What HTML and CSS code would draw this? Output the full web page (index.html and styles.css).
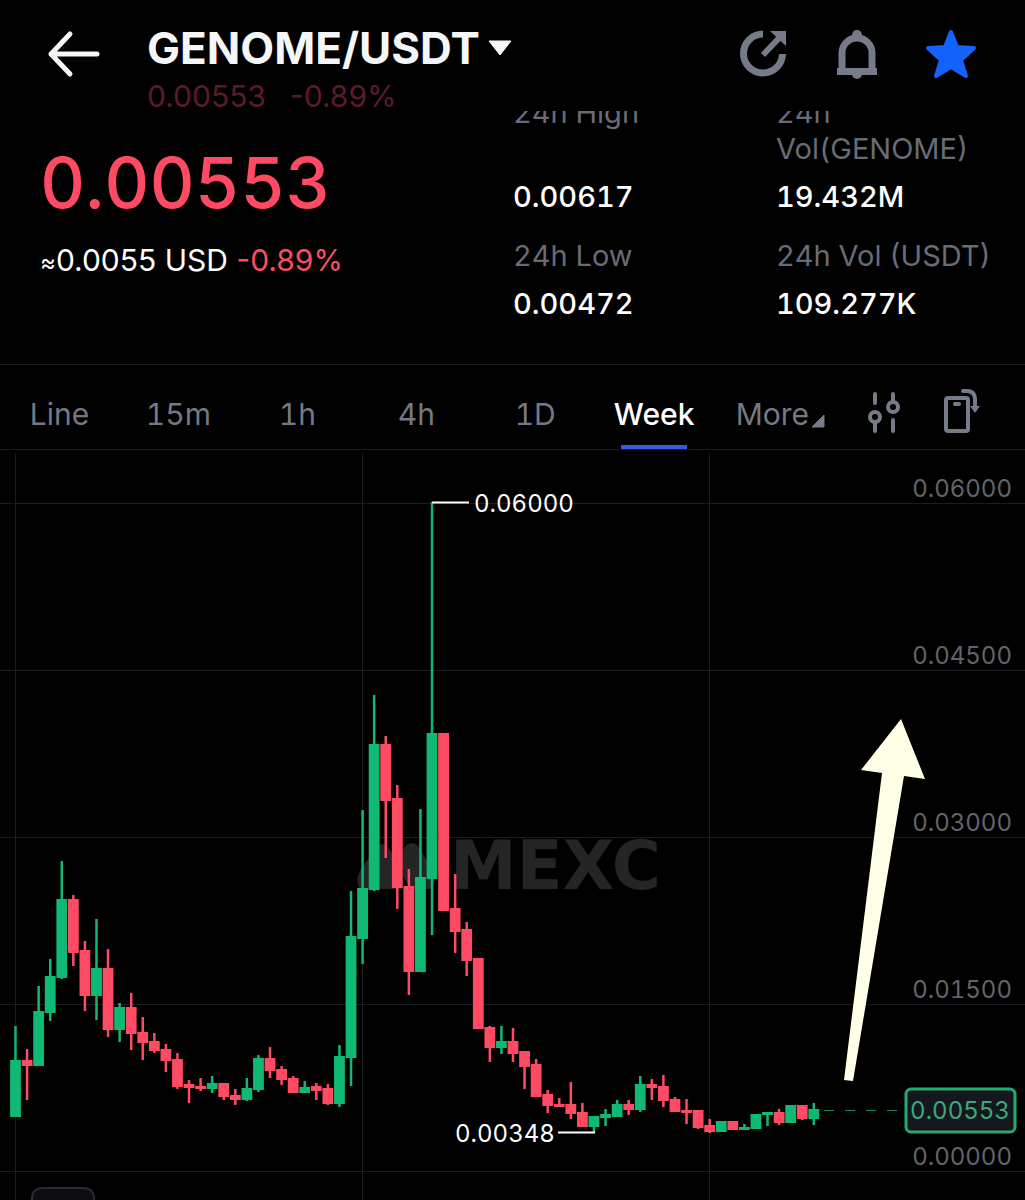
FILE: index.html
```html
<!DOCTYPE html>
<html lang="en">
<head>
    <meta charset="utf-8">
    <meta name="viewport" content="width=device-width, initial-scale=1">
    <title>GENOME/USDT</title>
    <link rel="stylesheet" href="styles.css">
</head>
<body>
    <header class="topbar">
        <button class="icon-btn back" aria-label="Back">
            <svg width="54" height="48" viewBox="0 0 54 48"><path d="M23 4L4 24l19 20M4 24h46" fill="none" stroke="#f5f6f8" stroke-width="5" stroke-linecap="round" stroke-linejoin="round"/></svg>
        </button>
        <div class="pair">
            <button class="pair-btn">
                <span class="pair-name">GENOME/USDT</span>
                <svg width="24" height="16" viewBox="0 0 24 16"><path d="M1 1h22L12 15z" fill="#f5f6f8" stroke="#f5f6f8" stroke-linejoin="round"/></svg>
            </button>
            <div class="pair-price"><span>0.00553</span><span>-0.89%</span></div>
        </div>
        <div class="actions">
            <button class="icon-btn" aria-label="Share">
                <svg width="52" height="52" viewBox="0 0 52 52"><path d="M26 7A19.5 19.5 0 1 0 45.500 27" fill="none" stroke="#757b88" stroke-width="7"/><path d="M26 28L43 10" stroke="#757b88" stroke-width="6"/><path d="M33 4h16v15z" fill="#757b88"/></svg>
            </button>
            <button class="icon-btn" aria-label="Price alert">
                <svg width="52" height="52" viewBox="0 0 52 52"><g fill="#757b88"><circle cx="26" cy="8" r="5"/><path d="M6 41h40v7H6z"/><path d="M21 47a5 5 0 0 0 10 0z"/></g><path d="M11 43V26a15 15 0 0 1 30 0v17" fill="none" stroke="#757b88" stroke-width="7"/></svg>
            </button>
            <button class="icon-btn" aria-label="Favourite">
                <svg width="52" height="52" viewBox="0 0 52 52"><path d="M26 5l6 15 17 1-13 12 5 16-15-9-15 9 5-16L3 21l17-1z" fill="#1462fc" stroke="#1462fc" stroke-width="4" stroke-linejoin="round"/></svg>
            </button>
        </div>
    </header>

    <section class="summary">
        <div class="price-box">
            <div class="price">0.00553</div>
            <div class="price-sub"><span><small>≈</small>0.0055 USD</span> <span class="down">-0.89%</span></div>
        </div>
        <dl class="stats">
            <div><dt>24h High</dt><dd>0.00617</dd></div>
            <div><dt>24h<br>Vol(GENOME)</dt><dd>19.432M</dd></div>
            <div><dt>24h Low</dt><dd>0.00472</dd></div>
            <div><dt>24h Vol (USDT)</dt><dd>109.277K</dd></div>
        </dl>
    </section>

    <nav class="intervals">
        <div class="tabs">
            <button>Line</button>
            <button>15m</button>
            <button>1h</button>
            <button>4h</button>
            <button>1D</button>
            <button class="active">Week</button>
        </div>
        <div class="tools">
            <button class="more">More<svg width="14" height="14" viewBox="0 0 14 14"><path d="M13 1v12H1z" fill="#757b88" stroke="#757b88" stroke-linejoin="round"/></svg></button>
            <button class="icon-btn" aria-label="Indicators">
                <svg width="34" height="46" viewBox="0 0 34 46"><g fill="none" stroke="#757b88" stroke-width="4" stroke-linecap="round"><path d="M8 5v9M8 33v9M26 5v6M26 31v11"/><circle cx="8" cy="28" r="5"/><circle cx="26" cy="18" r="5"/></g></svg>
            </button>
            <button class="icon-btn" aria-label="Landscape">
                <svg width="38" height="46" viewBox="0 0 38 46"><g fill="none" stroke="#757b88" stroke-width="4" stroke-linecap="round"><rect x="3" y="9" width="22" height="33" rx="2"/><path d="M12 15h4"/><path d="M20 2h4q8 0 8 9v8"/></g><path d="M27 17h10l-5 7z" fill="#757b88"/></svg>
            </button>
        </div>
    </nav>

    <main class="chart">
        <svg class="chart-svg" viewBox="0 450 1025 750" role="img" aria-label="Weekly candlestick chart">
            <g class="watermark">
                <path d="M358 884q-2-6 3-15l13-19q8-12 16 0l7 11 6-12q9-12 17 0l13 22q4 10-2 18h-20l-14-22v22h-36q-2 0-3-5z"/>
                <text x="450" y="889">MEXC</text>
            </g>
            <path class="grid" d="M0 503.500h1025M0 670.500h1025M0 837.500h1025M0 1004.500h1025M0 1171.500h1025M15.500 453v747M362.500 453v747M709.500 453v747"/>
            <g id="candles"></g>
            <path class="mark-line" d="M432 502.500h37M558 1132.500h37"/>
            <g class="mark">
                <text x="474" y="512">0.06000</text>
                <text x="455" y="1142">0.00348</text>
            </g>
            <g class="axis">
                <text x="1012" y="497">0.06000</text>
                <text x="1012" y="664">0.04500</text>
                <text x="1012" y="831">0.03000</text>
                <text x="1012" y="998">0.01500</text>
                <text x="1012" y="1165">0.00000</text>
            </g>
            <path class="last-line" d="M824 1110.500h76"/>
            <rect class="last-box" x="906" y="1089" width="109" height="43" rx="5"/>
            <text class="last-text" x="960" y="1119">0.00553</text>
            <path class="arrow" d="M901 719l24 60-21-3-51 305-9-1 38-307-21-3z"/>
            <path class="chip" d="M32 1202v-3q0-11 11-11h40q11 0 11 11v3"/>
        </svg>
    </main>

    <script>
        // [direction, high, body top, body bottom, low]
        const candles = [
            ['u', 1026, 1060, 1117, 1117], ['d', 1049, 1060, 1066, 1100], ['u', 986, 1011, 1066, 1066],
            ['u', 959, 976, 1013, 1021], ['u', 861, 899, 978, 979], ['d', 895, 899, 953, 966],
            ['d', 941, 950, 996, 1011], ['u', 919, 968, 996, 1020], ['d', 949, 968, 1030, 1037],
            ['u', 1003, 1007, 1030, 1042], ['d', 993, 1007, 1034, 1050], ['d', 1017, 1032, 1043, 1060],
            ['d', 1033, 1041, 1051, 1053], ['d', 1044, 1049, 1061, 1072], ['d', 1053, 1059, 1087, 1089],
            ['d', 1080, 1084, 1088, 1103], ['d', 1078, 1086, 1089, 1091], ['u', 1076, 1083, 1089, 1093],
            ['d', 1083, 1083, 1097, 1100], ['d', 1089, 1095, 1100, 1105], ['u', 1078, 1088, 1100, 1101],
            ['u', 1055, 1058, 1090, 1092], ['d', 1047, 1058, 1071, 1078], ['d', 1066, 1069, 1080, 1085],
            ['d', 1076, 1078, 1093, 1093], ['u', 1081, 1087, 1093, 1093], ['d', 1083, 1086, 1091, 1100],
            ['d', 1084, 1088, 1104, 1105], ['u', 1045, 1056, 1104, 1107], ['u', 891, 936, 1058, 1086],
            ['u', 810, 888, 939, 964], ['u', 695, 744, 890, 891], ['d', 736, 744, 801, 858],
            ['d', 785, 798, 888, 909], ['d', 869, 886, 972, 995], ['u', 809, 877, 972, 972],
            ['u', 502, 733, 879, 935], ['d', 733, 733, 911, 911], ['d', 874, 908, 932, 953],
            ['d', 922, 929, 961, 976], ['d', 958, 958, 1029, 1029], ['d', 1026, 1027, 1048, 1062],
            ['u', 1026, 1041, 1048, 1054], ['d', 1028, 1041, 1054, 1062], ['d', 1051, 1051, 1067, 1089],
            ['d', 1059, 1064, 1097, 1097], ['d', 1090, 1094, 1106, 1113], ['d', 1098, 1104, 1107, 1107],
            ['d', 1082, 1104, 1114, 1119], ['d', 1103, 1112, 1127, 1127], ['u', 1116, 1116, 1127, 1132],
            ['u', 1109, 1114, 1118, 1126], ['u', 1100, 1104, 1117, 1117], ['d', 1100, 1104, 1110, 1115],
            ['u', 1076, 1084, 1110, 1112], ['d', 1079, 1084, 1088, 1100], ['d', 1075, 1086, 1101, 1107],
            ['d', 1097, 1099, 1112, 1112], ['d', 1099, 1110, 1113, 1124], ['d', 1110, 1110, 1128, 1129],
            ['d', 1119, 1125, 1132, 1133], ['u', 1121, 1121, 1132, 1132], ['d', 1121, 1121, 1130, 1130],
            ['u', 1124, 1127, 1130, 1130], ['u', 1114, 1114, 1129, 1129], ['u', 1112, 1112, 1115, 1126],
            ['d', 1109, 1112, 1123, 1125], ['u', 1105, 1105, 1123, 1123], ['d', 1105, 1105, 1119, 1120],
            ['u', 1103, 1109, 1119, 1125]
        ];
        const first = 15.5;
        const last = 813.8;
        const step = (last - first) / (candles.length - 1);

        document.getElementById('candles').innerHTML = candles.map(function (c, i) {
            const x = first + i * step;
            return `<g class="${c[0] === 'u' ? 'up' : 'dn'}">` +
                `<rect x="${x - 1.25}" y="${c[1]}" width="2.5" height="${c[4] - c[1]}"/>` +
                `<rect x="${x - 5.4}" y="${c[2]}" width="10.8" height="${c[3] - c[2]}"/></g>`;
        }).join('');
    </script>
</body>
</html>
```
FILE: styles.css
```css
* {
    box-sizing: border-box;
}
body {
    margin: 0;
    background-color: #000;
    color: #fff;
    font-family: Inter, "Liberation Sans", sans-serif;
    font-size: 30px;
    line-height: 36px;
}
button {
    padding: 0;
    border: none;
    background: none;
    color: inherit;
    font: inherit;
    cursor: pointer;
}
svg {
    display: block;
}
.icon-btn {
    flex: none;
}
.price, .stats, .tabs button, .chart-svg {
    font-variant-numeric: tabular-nums;
}

/* top bar */
.topbar {
    display: flex;
    align-items: flex-start;
    height: 111px;
    padding: 20px 48px 0 47px;
}
.back {
    margin-top: 10px;
}
.pair {
    margin-left: 46px;
}
.pair-btn {
    display: flex;
    align-items: center;
    gap: 8px;
    height: 56px;
}
.pair-name {
    color: #f5f6f8;
    font-size: 44px;
    font-weight: 700;
}
.pair-price {
    display: flex;
    gap: 24px;
    color: #5c1c27;
    line-height: 40px;
}
.actions {
    display: flex;
    gap: 42px;
    margin: 7px 0 0 auto;
}

/* price and 24h stats */
.summary {
    display: flex;
    justify-content: space-between;
    height: 254px;
    padding: 0 36px 0 40px;
    overflow: hidden;
    border-bottom: 1px solid #1b1c1f;
}
.price {
    margin-top: 30px;
    color: #ff4a63;
    font-size: 70px;
    font-weight: 500;
    line-height: 84px;
}
.price-sub {
    margin-top: 17px;
}
.price-sub small {
    font-size: 24px;
}
.down {
    color: #ff4a63;
}
.stats {
    display: grid;
    grid-template-columns: 263px 213px;
    align-content: start;
    row-gap: 23px;
    margin: -16px 0 0;
    font-size: 29px;
    white-space: nowrap;
}
.stats div {
    display: flex;
    flex-direction: column;
    justify-content: space-between;
    gap: 12px;
}
.stats dt {
    color: #686c76;
}
.stats dd {
    margin: 0;
    font-weight: 500;
}

/* interval tabs */
.intervals {
    display: flex;
    height: 85px;
    border-bottom: 1px solid #1b1c1f;
    color: #757983;
}
.tabs {
    display: grid;
    grid-template-columns: repeat(6, 1fr);
    flex: 1;
}
.tabs button {
    position: relative;
    padding-top: 14px;
}
.tabs .active {
    color: #fff;
    font-weight: 500;
}
.tabs .active::after {
    content: "";
    position: absolute;
    bottom: 0;
    left: 50%;
    width: 66px;
    height: 4px;
    margin-left: -33px;
    background-color: #2c60e0;
}
.tools {
    display: flex;
    align-items: center;
    gap: 42px;
    padding: 10px 44px 0 22px;
}
.more {
    display: flex;
    align-items: flex-end;
    gap: 2px;
    padding-top: 4px;
}
.more svg {
    margin-bottom: 4px;
}

/* chart */
.chart-svg {
    width: 100%;
    height: auto;
    font-size: 24px;
}
.watermark {
    fill: #242626;
    font-family: "DejaVu Sans", sans-serif;
    font-size: 67px;
    font-weight: 700;
}
.grid {
    fill: none;
    stroke: #1b1c22;
}
.up {
    fill: #10b973;
}
.dn {
    fill: #ff4a63;
}
.mark {
    fill: #fff;
}
.mark-line {
    stroke: #fff;
    stroke-width: 2;
}
.axis {
    fill: #62646a;
    text-anchor: end;
}
.last-line {
    stroke: #1d8a5c;
    stroke-dasharray: 10 11;
}
.last-box {
    fill: #15161e;
    stroke: #28a873;
    stroke-width: 3;
}
.last-text {
    fill: #3aa97a;
    text-anchor: middle;
}
.arrow {
    fill: #ffffe8;
}
.chip {
    fill: #0c0d12;
    stroke: #2a2c33;
    stroke-width: 2;
}
```
